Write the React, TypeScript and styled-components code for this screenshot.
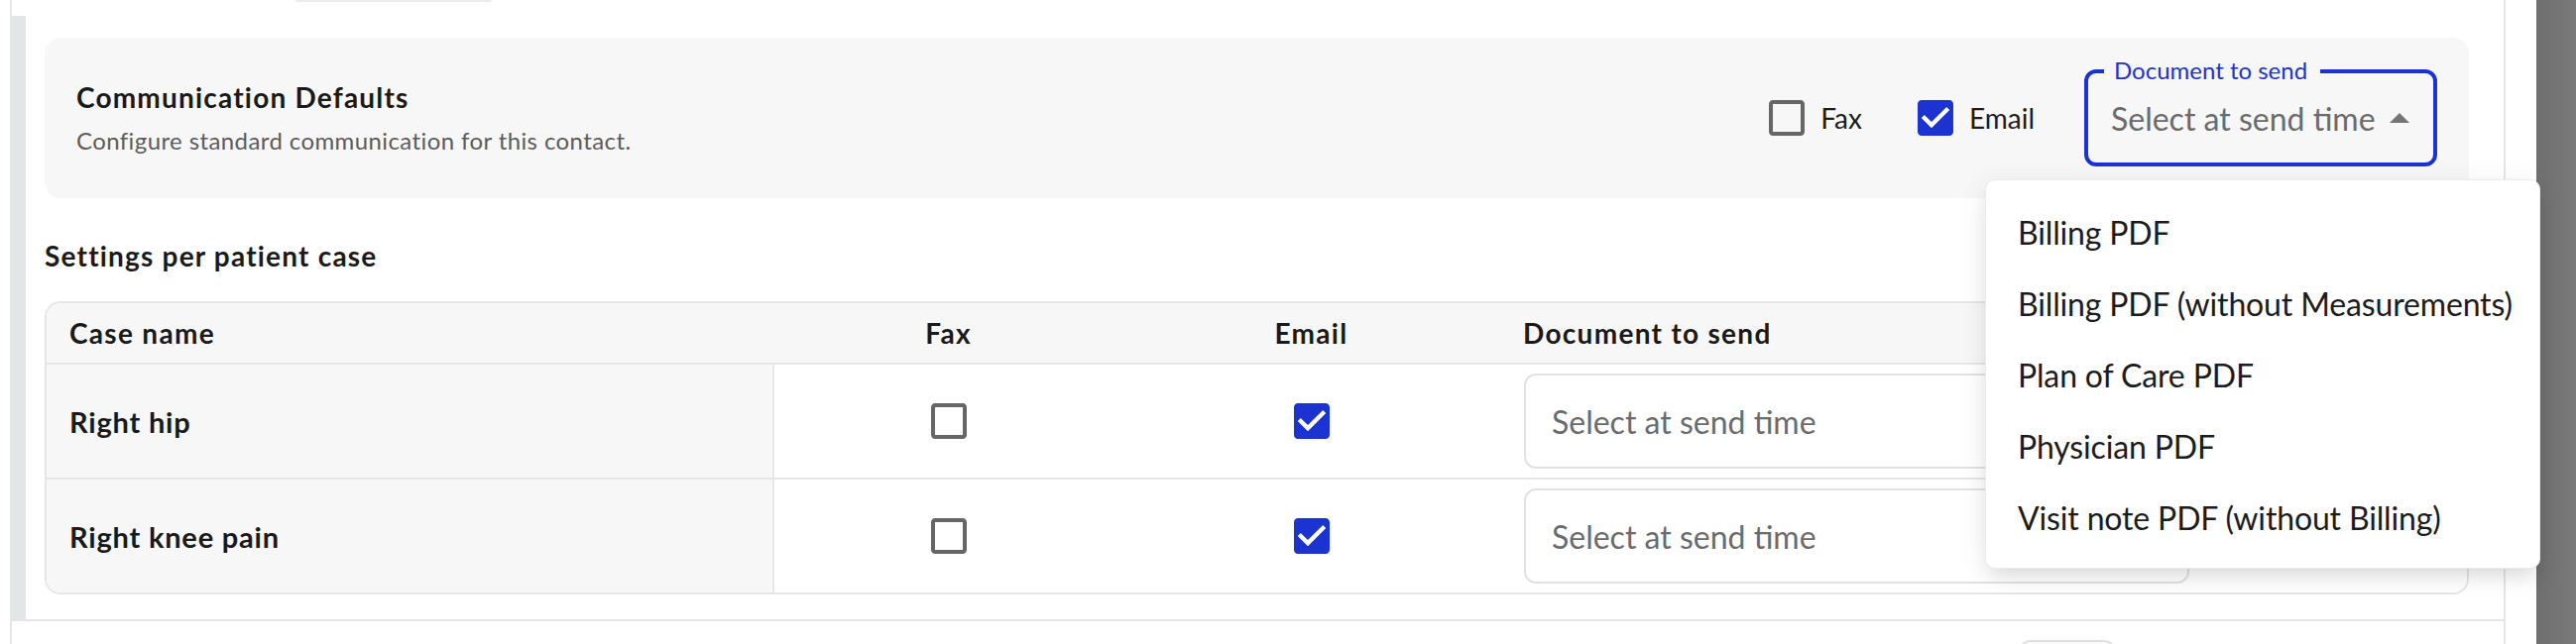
import * as React from 'react';
import styled, { createGlobalStyle } from 'styled-components';

const GlobalStyle = createGlobalStyle`
  html, body { margin: 0; padding: 0; background: #fff; }
  body { font-family: Lato, "Open Sans", sans-serif; color: #1c1c1c; }
  * { box-sizing: border-box; }
`;

const BLUE = '#1b34d1';
const LINE = '#e6e6e6';

const Page = styled.div`
  position: relative;
  display: flex;
  width: 2598px;
  height: 650px;
  overflow: hidden;
`;

const Drawer = styled.div`
  flex: 1;
  padding: 0 31px 0 10px;
  background: #fff;
`;

const Backdrop = styled.div`
  width: 40px;
  background: linear-gradient(90deg, #6f6f6f, #7a7a7a);
`;

const Frame = styled.div`
  height: 100%;
  display: flex;
  flex-direction: column;
  border-left: 2px solid ${LINE};
  border-right: 2px solid ${LINE};
`;

const TopStrip = styled.div`
  flex-shrink: 0;
  height: 16px;
  padding-left: 285px;
`;

const TabEdge = styled.div`
  width: 200px;
  height: 4px;
  margin-top: -2px;
  border: 2px solid #ececec;
  border-top: none;
  border-radius: 0 0 10px 10px;
`;

const Expanded = styled.section`
  flex-shrink: 0;
  border-left: 14px solid #e3e6e6;
  border-bottom: 2px solid ${LINE};
  padding: 22px 35px 25px 19px;
`;

const DefaultsCard = styled.div`
  display: flex;
  align-items: center;
  justify-content: space-between;
  height: 162px;
  padding: 0 32px;
  background: #f7f7f7;
  border-radius: 16px;
`;

const Title = styled.div`
  font-size: 28px;
  line-height: 36px;
  font-weight: 700;
  letter-spacing: 1.2px;
  color: #1a1a1a;
`;

const Subtitle = styled.div`
  margin-top: 10px;
  font-size: 24px;
  line-height: 32px;
  letter-spacing: 0.4px;
  color: #5c5c5c;
`;

const Controls = styled.div`
  display: flex;
  align-items: center;
  gap: 50px;
`;

const CheckLabel = styled.label`
  display: inline-flex;
  align-items: center;
  gap: 10px;
  font-size: 28px;
  color: #1c1c1c;
`;

const SelectBox = styled.div<{ $focused?: boolean; $width: number }>`
  position: relative;
  display: flex;
  align-items: center;
  width: ${p => p.$width}px;
  height: ${p => (p.$focused ? 98 : 96)}px;
  padding: 0 24px 0 ${p => (p.$focused ? 23 : 26)}px;
  border: ${p => (p.$focused ? `4px solid ${BLUE}` : '2px solid #e2e2e2')};
  border-radius: 12px;
  background: ${p => (p.$focused ? 'transparent' : '#fff')};
`;

const FloatLabel = styled.span`
  position: absolute;
  top: -17px;
  left: 16px;
  padding: 0 13px 0 10px;
  background: #f7f7f7;
  font-size: 24px;
  line-height: 28px;
  color: ${BLUE};
`;

const Placeholder = styled.span`
  flex: 1;
  font-size: 32px;
  color: #6b6b6b;
  white-space: nowrap;
`;

const Heading = styled.h3`
  margin: 38px 0 26px;
  font-size: 28px;
  line-height: 40px;
  font-weight: 700;
  letter-spacing: 1.2px;
  color: #1a1a1a;
`;

const Table = styled.div`
  border: 2px solid ${LINE};
  border-radius: 16px;
  overflow: hidden;
`;

const Row = styled.div<{ $head?: boolean; $last?: boolean }>`
  display: grid;
  grid-template-columns: 734px 352px 380px 1fr;
  height: ${p => (p.$head ? 62 : p.$last ? 114 : 116)}px;
  background: ${p => (p.$head ? '#f7f7f7' : '#fff')};
  border-bottom: ${p => (p.$last ? 'none' : `2px solid ${LINE}`)};
`;

const HeadCell = styled.div<{ $center?: boolean }>`
  display: flex;
  align-items: center;
  justify-content: ${p => (p.$center ? 'center' : 'flex-start')};
  padding: 0 24px 0 23px;
  font-size: 28px;
  font-weight: 700;
  letter-spacing: 1.3px;
  color: #1a1a1a;
`;

const NameCell = styled.div`
  display: flex;
  align-items: center;
  padding: 0 23px;
  background: #f7f7f7;
  border-right: 2px solid ${LINE};
  font-size: 29px;
  font-weight: 700;
  letter-spacing: 0.8px;
  color: #1a1a1a;
`;

const CheckCell = styled.div`
  display: flex;
  align-items: center;
  justify-content: center;
`;

const DocCell = styled.div`
  display: flex;
  align-items: center;
  padding-left: 24px;
`;

const NextRow = styled.div`
  flex: 1;
  min-height: 0;
  display: flex;
  justify-content: flex-end;
  padding: 19px 392px 0 0;
  overflow: hidden;
`;

const MiniButton = styled.div`
  flex-shrink: 0;
  width: 96px;
  height: 40px;
  border: 2px solid #e0e0e0;
  border-radius: 10px;
  background: #fafafa;
`;

const Menu = styled.ul`
  position: absolute;
  left: 2002px;
  top: 181px;
  width: 560px;
  height: 393px;
  margin: 0;
  padding: 16px 0;
  list-style: none;
  background: #fff;
  border: 1px solid #ececec;
  border-radius: 10px;
  box-shadow: 0 10px 20px -6px rgba(0, 0, 0, 0.12), 0 6px 28px 4px rgba(0, 0, 0, 0.06);
`;

const MenuItem = styled.li`
  display: flex;
  align-items: center;
  height: 72px;
  padding: 0 32px;
  font-size: 32px;
  letter-spacing: -0.15px;
  color: #1c1c1c;
  white-space: nowrap;
`;

const Check: React.FC<{ checked?: boolean }> = ({ checked }) =>
  checked ? (
    <svg width="48" height="48" viewBox="0 0 24 24" fill={BLUE}>
      <path d="M19 3H5c-1.11 0-2 .9-2 2v14c0 1.1.89 2 2 2h14c1.11 0 2-.9 2-2V5c0-1.1-.89-2-2-2zm-9 14l-5-5 1.41-1.41L10 14.17l7.59-7.59L19 8l-9 9z" />
      <path d="M10 17l-5-5 1.41-1.41L10 14.17l7.59-7.59L19 8l-9 9z" fill="#fff" />
    </svg>
  ) : (
    <svg width="48" height="48" viewBox="0 0 24 24" fill="#666">
      <path d="M19 5v14H5V5h14m0-2H5c-1.1 0-2 .9-2 2v14c0 1.1.9 2 2 2h14c1.1 0 2-.9 2-2V5c0-1.1-.9-2-2-2z" />
    </svg>
  );

const Arrow: React.FC<{ up?: boolean }> = ({ up }) => (
  <svg width="20" height="10" viewBox="0 0 20 10" fill="#757575">
    {up ? <polygon points="0,10 10,0 20,10" /> : <polygon points="0,0 10,10 20,0" />}
  </svg>
);

const cases = [
  { name: 'Right hip', fax: false, email: true },
  { name: 'Right knee pain', fax: false, email: true },
];

const documents = [
  'Billing PDF',
  'Billing PDF (without Measurements)',
  'Plan of Care PDF',
  'Physician PDF',
  'Visit note PDF (without Billing)',
];

const App: React.FC = () => (
  <>
    <GlobalStyle />
    <Page>
      <Drawer>
        <Frame>
          <TopStrip>
            <TabEdge />
          </TopStrip>
          <Expanded>
            <DefaultsCard>
              <div>
                <Title>Communication Defaults</Title>
                <Subtitle>Configure standard communication for this contact.</Subtitle>
              </div>
              <Controls>
                <CheckLabel>
                  <Check />
                  Fax
                </CheckLabel>
                <CheckLabel>
                  <Check checked />
                  Email
                </CheckLabel>
                <SelectBox $focused $width={356}>
                  <FloatLabel>Document to send</FloatLabel>
                  <Placeholder>Select at send time</Placeholder>
                  <Arrow up />
                </SelectBox>
              </Controls>
            </DefaultsCard>

            <Heading>Settings per patient case</Heading>

            <Table>
              <Row $head>
                <HeadCell>Case name</HeadCell>
                <HeadCell $center>Fax</HeadCell>
                <HeadCell $center>Email</HeadCell>
                <HeadCell>Document to send</HeadCell>
              </Row>
              {cases.map((c, i) => (
                <Row key={c.name} $last={i === cases.length - 1}>
                  <NameCell>{c.name}</NameCell>
                  <CheckCell>
                    <Check checked={c.fax} />
                  </CheckCell>
                  <CheckCell>
                    <Check checked={c.email} />
                  </CheckCell>
                  <DocCell>
                    <SelectBox $width={671}>
                      <Placeholder>Select at send time</Placeholder>
                      <Arrow />
                    </SelectBox>
                  </DocCell>
                </Row>
              ))}
            </Table>
          </Expanded>
          <NextRow>
            <MiniButton />
          </NextRow>
        </Frame>
      </Drawer>
      <Backdrop />

      <Menu>
        {documents.map(d => (
          <MenuItem key={d}>{d}</MenuItem>
        ))}
      </Menu>
    </Page>
  </>
);

export default App;
